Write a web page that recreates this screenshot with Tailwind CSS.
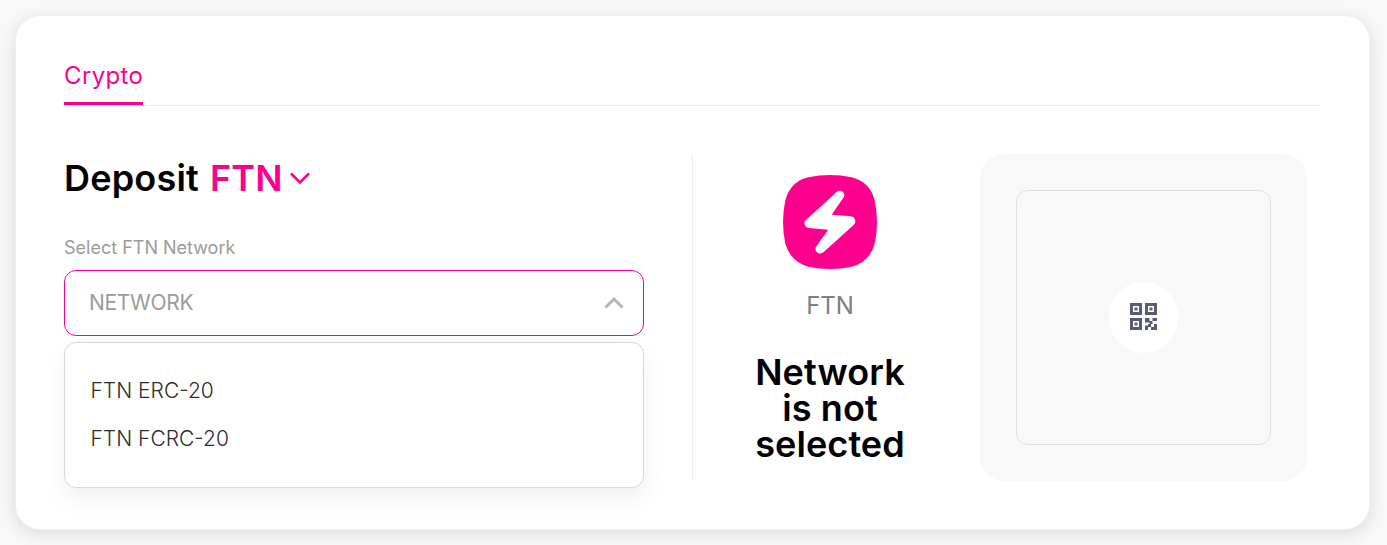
<!DOCTYPE html>
<html lang="en">
<head>
    <meta charset="UTF-8">
    <meta name="viewport" content="width=device-width, initial-scale=1.0">
    <title>Deposit FTN</title>
    <script src="https://cdn.jsdelivr.net/npm/@tailwindcss/browser@4"></script>
</head>
<body class="bg-[#f8f8f8] font-['Inter',sans-serif] h-[545px] overflow-hidden pt-[15px] pl-[15px] text-black">

    <main class="w-[1355px] h-[515px] rounded-[25px] border border-[#f0f0f0] bg-white px-12 pt-[43px] shadow-[0_4px_16px_rgba(0,0,0,0.12)]">

        <!-- Tabs -->
        <nav class="flex w-[1257px] h-[47px] border-b border-[#eeeeee]">
            <a class="h-[46px] border-b-[3px] border-[#ff008e] text-2xl leading-[34px] tracking-[0.36px] text-[#ff008e]">Crypto</a>
        </nav>

        <div class="flex pt-12">

            <!-- Network form -->
            <section class="w-[580px] shrink-0">
                <h1 class="flex items-center h-12 text-4xl leading-[48px] font-[560] tracking-[0.2px]">
                    <span class="w-[134px]">Deposit</span>
                    <span class="ml-3 w-[72px] text-[#ff008e]">FTN</span>
                    <svg class="ml-2 w-5 h-5" viewBox="0 0 20 20" fill="none" stroke="#ff008e" stroke-width="2.6"><path d="M1 5.500l9 9 9-9"/></svg>
                </h1>
                <p class="mt-[34px] text-lg leading-6 text-[#9b9b9b]">Select FTN Network</p>
                <div class="relative mt-[10px]">
                    <div class="flex items-center justify-between h-[66px] rounded-xl border border-[#ff008e] pl-6 pr-[19px] text-[21px] tracking-[-0.3px] text-[#9b9b9b]">
                        <span>NETWORK</span>
                        <svg class="w-5 h-5" viewBox="0 0 20 20" fill="none" stroke="#b5b5b5" stroke-width="3"><path d="M1.5 14.5l8.500-8.500 8.500 8.500"/></svg>
                    </div>
                    <ul class="absolute top-[72px] left-0 w-full h-[146px] rounded-xl border border-[#d8d8d8] bg-white pl-[25.5px] pt-6 text-[21px] leading-[48px] font-light text-[#2d2d2d] shadow-[0_12px_24px_rgba(0,0,0,0.06)]">
                        <li>FTN ERC-20</li>
                        <li>FTN FCRC-20</li>
                    </ul>
                </div>
            </section>

            <!-- Selected coin -->
            <section class="ml-12 flex flex-col items-center w-[275px] h-[327px] border-l border-[#eeeeee] pt-[21px]">
                <svg class="w-[94px] h-[94px]" viewBox="0 0 282 282">
                    <path fill="#ff008e" d="M76 7Q141-7 206 7Q262 22 275 76Q289 141 275 206Q260 262 206 275Q141 289 76 275Q22 260 7 206Q-7 141 7 76Q22 20 76 7Z"/>
                    <path fill="#fff" d="M161 51A13 13 0 0 1 180 70L146 119L204 124A15 15 0 0 1 212 150L122 231A13 13 0 0 1 101 212L136 164L77 159A14 14 0 0 1 70 134Z"/>
                </svg>
                <p class="mt-[21px] text-2xl leading-8 text-[#808080]">FTN</p>
                <h2 class="mt-8 w-[170px] text-center text-4xl leading-9 font-[560] tracking-[0.1px]">Network<br>is not<br>selected</h2>
            </section>

            <!-- QR placeholder -->
            <section class="ml-[13px] flex items-center justify-center w-[327px] h-[327px] rounded-3xl bg-[#f8f8f8]">
                <div class="flex items-center justify-center w-[255px] h-[255px] rounded-xl border border-[#e0e0e0]">
                    <div class="flex items-center justify-center w-[69px] h-[71px] rounded-full bg-white">
                        <svg class="mb-0.5 w-[27px] h-[27px]" viewBox="3 3 18 18" fill="#5a5d72">
                            <path d="M16 17v-1h-3v-3h3v2h2v2h-1v2h-2v2h-2v-3h2v-1h1zm5 4h-4v-2h2v-2h2v4zM3 3h8v8H3V3zm2 2v4h4V5H5zm8-2h8v8h-8V3zm2 2v4h4V5h-4zM3 13h8v8H3v-8zm2 2v4h4v-4H5zm13-2h3v2h-3v-2zM6 6h2v2H6V6zm0 10h2v2H6v-2zM16 6h2v2h-2V6z"/>
                        </svg>
                    </div>
                </div>
            </section>
        </div>
    </main>

</body>
</html>
